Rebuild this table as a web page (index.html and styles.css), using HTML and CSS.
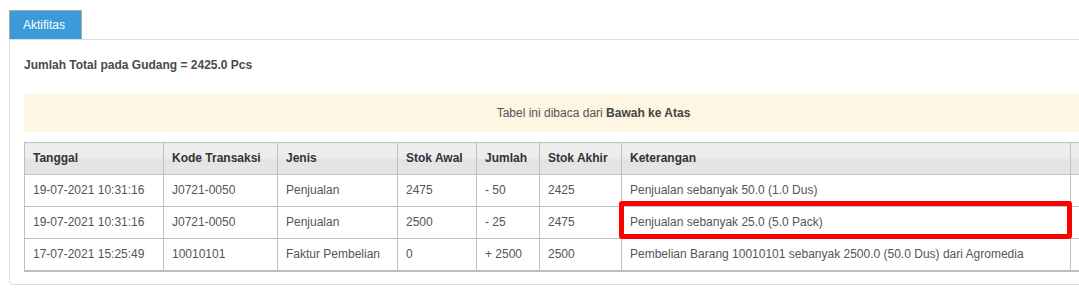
FILE: index.html
```html
<!DOCTYPE html>
<html lang="id">
<head>
<meta charset="utf-8">
<title>Aktifitas</title>
<link rel="stylesheet" href="styles.css">
</head>
<body>
<div class="page">
  <div class="tabs">
    <div class="tab">Aktifitas</div>
  </div>
  <div class="panel">
    <div class="total">Jumlah Total pada Gudang = 2425.0 Pcs</div>
    <div class="notice">Tabel ini dibaca dari <b>Bawah ke Atas</b></div>
    <table class="grid">
      <colgroup>
        <col class="c1"><col class="c2"><col class="c3"><col class="c4"><col class="c5"><col class="c6"><col class="c7"><col class="c8">
      </colgroup>
      <thead>
        <tr>
          <th>Tanggal</th><th>Kode Transaksi</th><th>Jenis</th><th>Stok Awal</th><th>Jumlah</th><th>Stok Akhir</th><th>Keterangan</th><th class="act">Opsi</th>
        </tr>
      </thead>
      <tbody>
        <tr>
          <td>19-07-2021 10:31:16</td><td>J0721-0050</td><td>Penjualan</td><td>2475</td><td>- 50</td><td>2425</td><td>Penjualan sebanyak 50.0 (1.0 Dus)</td><td class="act">Lihat</td>
        </tr>
        <tr>
          <td>19-07-2021 10:31:16</td><td>J0721-0050</td><td>Penjualan</td><td>2500</td><td>- 25</td><td>2475</td><td>Penjualan sebanyak 25.0 (5.0 Pack)</td><td class="act">Lihat</td>
        </tr>
        <tr>
          <td>17-07-2021 15:25:49</td><td>10010101</td><td>Faktur Pembelian</td><td>0</td><td>+ 2500</td><td>2500</td><td>Pembelian Barang 10010101 sebanyak 2500.0 (50.0 Dus) dari Agromedia</td><td class="act">Lihat</td>
        </tr>
      </tbody>
    </table>
  </div>
  <div class="highlight"></div>
</div>
</body>
</html>
```

FILE: styles.css
```css
html, body {
  margin: 0;
  padding: 0;
  background: #ffffff;
  overflow: hidden;
}

body {
  font-family: "Liberation Sans", Arial, sans-serif;
  font-size: 12px;
  color: #555555;
}

.page {
  position: relative;
  width: 1177px;
  padding: 10px 0 0 9px;
}

.tabs {
  display: flex;
  height: 29px;
}

.tab {
  box-sizing: border-box;
  width: 73px;
  height: 29px;
  padding: 7px 0 0 13px;
  background: #3a9bd8;
  color: #ffffff;
  border: 1px solid #a9a9a9;
  border-bottom: none;
  font-size: 12px;
  line-height: 15px;
}

.panel {
  border: 1px solid #dddddd;
  border-radius: 0 0 4px 4px;
  padding: 18px 14px 12px 14px;
}

.total {
  font-weight: bold;
  color: #4a4a4a;
  line-height: 15px;
  height: 15px;
}

.notice {
  margin-top: 21px;
  margin-right: 8px;
  height: 38px;
  line-height: 38px;
  background: #fcf6e3;
  text-align: center;
  color: #555555;
}

.notice b {
  color: #444444;
}

.grid {
  margin-top: 10px;
  width: 1138px;
  border-collapse: collapse;
  table-layout: fixed;
  border-bottom: 2px solid #b8bec3;
}

.c1 { width: 139px; }
.c2 { width: 114px; }
.c3 { width: 120px; }
.c4 { width: 79px; }
.c5 { width: 63px; }
.c6 { width: 82px; }
.c7 { width: 449px; }
.c8 { width: 92px; }

.grid th,
.grid td {
  border: 1px solid #bcc2c6;
  padding: 8px 8px;
  line-height: 15px;
  text-align: left;
  white-space: nowrap;
  overflow: hidden;
}

.grid th {
  font-weight: bold;
  color: #333333;
  background: linear-gradient(#eeeeee 0%, #ececec 48%, #e3e3e3 52%, #e6e6e6 100%);
}

.grid td {
  color: #555555;
}

.grid .act {
  color: #e8a33a;
}

.highlight {
  position: absolute;
  left: 619px;
  top: 201px;
  width: 453px;
  height: 38px;
  box-sizing: border-box;
  border: 5px solid #ff0000;
  border-radius: 3px;
}
```
